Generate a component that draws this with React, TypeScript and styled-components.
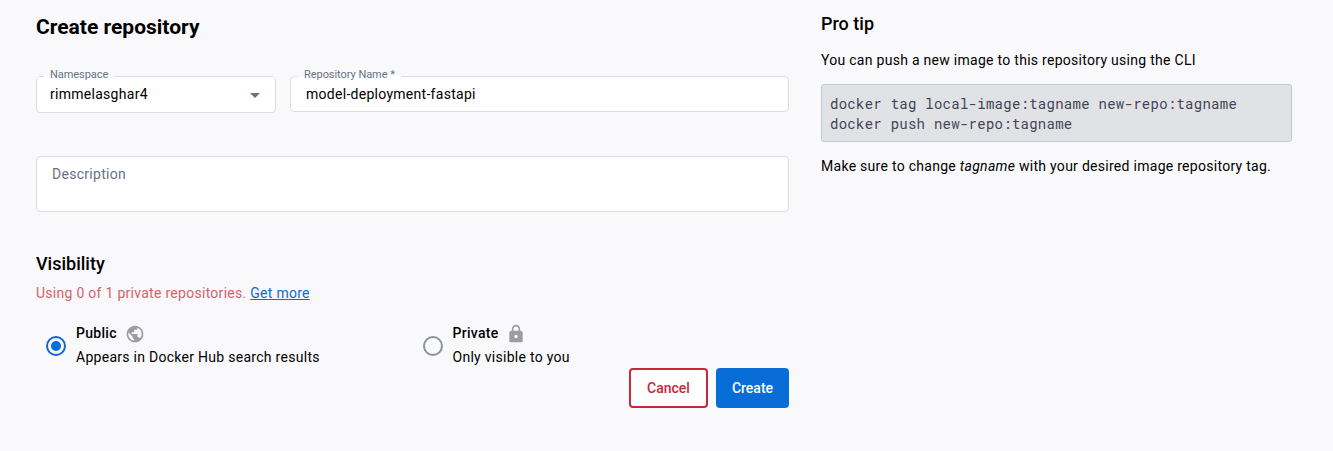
import React from "react";
import styled, { createGlobalStyle } from "styled-components";

const GlobalStyle = createGlobalStyle`
  * { box-sizing: border-box; }
  body {
    margin: 0;
    background: #f9f9fb;
    color: #000;
    font-family: Roboto, "Liberation Sans", sans-serif;
    font-size: 14px;
    line-height: 20px;
    letter-spacing: 0.28px;
  }
`;

const Page = styled.main`
  display: grid;
  grid-template-columns: 753px 471px;
  column-gap: 32px;
  min-height: 451px;
  padding: 0 36px;
`;

const FormColumn = styled.form`
  display: flex;
  flex-direction: column;
  padding-top: 15px;
`;

const Title = styled.h1`
  margin: 0;
  font-size: 21px;
  line-height: 24px;
  font-weight: 700;
  letter-spacing: 0;
`;

const FieldRow = styled.div`
  display: grid;
  grid-template-columns: 240px 499px;
  column-gap: 14px;
  align-items: start;
  margin-top: 31px;
`;

const Outlined = styled.fieldset<{ $height: number; $inset: number }>`
  display: block;
  min-width: 0;
  height: ${(p) => p.$height}px;
  margin: 0;
  padding: 0 14px 0 ${(p) => p.$inset}px;
  border: 1px solid #dcdde0;
  border-radius: 4px;
  background: #fff;
`;

const Legend = styled.legend<{ $shift: number }>`
  height: 13px;
  margin-left: ${(p) => -p.$shift}px;
  padding: 0 6px;
  color: #677285;
  font-size: 11px;
  line-height: 9px;
  letter-spacing: -0.05px;
`;

const FieldValue = styled.div`
  display: flex;
  align-items: center;
  justify-content: space-between;
  height: 22px;
`;

const Caret = styled.svg`
  width: 10px;
  height: 5px;
  margin: 2px 1px 0 0;
  fill: #677285;
`;

const Description = styled.div`
  height: 56px;
  margin-top: 43px;
  padding: 7px 15px;
  border: 1px solid #dcdde0;
  border-radius: 4px;
  background: #fff;
  color: #677285;
`;

const SectionTitle = styled.h2`
  margin: 0;
  font-size: 18px;
  line-height: 24px;
  font-weight: 500;
  letter-spacing: 0;
`;

const Visibility = styled.section`
  margin-top: 40px;
`;

const Usage = styled.p`
  margin: 7px 0 0;
  color: #d8606b;
`;

const Link = styled.a`
  color: #086dd7;
  text-decoration: underline;
`;

const Options = styled.div`
  display: grid;
  grid-template-columns: 376.5px 1fr;
  margin-top: 18px;
  padding-left: 10px;
`;

const Option = styled.label`
  display: flex;
  align-items: center;
  gap: 10px;
`;

const Radio = styled.span<{ $checked?: boolean }>`
  display: grid;
  place-items: center;
  width: 20px;
  height: 20px;
  margin-top: 2px;
  border: 2px solid ${(p) => (p.$checked ? "#1467c8" : "#8b91a1")};
  border-radius: 50%;

  &::after {
    content: "";
    width: 10px;
    height: 10px;
    border-radius: 50%;
    background: ${(p) => (p.$checked ? "#086dd7" : "transparent")};
  }
`;

const OptionName = styled.div`
  display: flex;
  align-items: center;
  gap: 8px;
  height: 24px;
  font-weight: 500;
`;

const OptionIcon = styled.svg`
  width: 20px;
  height: 20px;
  margin-top: 1px;
  fill: #9c9c9e;
`;

const OptionText = styled.div`
  height: 24px;
  line-height: 24px;
`;

const Actions = styled.div`
  display: flex;
  justify-content: flex-end;
  gap: 8px;
  margin-top: -1px;
`;

const Button = styled.button<{ $primary?: boolean }>`
  width: ${(p) => (p.$primary ? 73 : 79)}px;
  height: 40px;
  padding: 0;
  border: 2px solid ${(p) => (p.$primary ? "#086dd7" : "#c9283a")};
  border-radius: 4px;
  background: ${(p) => (p.$primary ? "#086dd7" : "#fff")};
  color: ${(p) => (p.$primary ? "#fff" : "#c9283a")};
  font: 500 14px/20px Roboto, "Liberation Sans", sans-serif;
  letter-spacing: 0;
`;

const Tip = styled.aside`
  padding-top: 12px;
`;

const TipText = styled.p`
  margin: 14px 0;
`;

const Code = styled.pre`
  height: 58px;
  margin: 0;
  padding: 9px 8px;
  border: 1px solid #c4c8d1;
  border-radius: 3px;
  background: #e1e2e6;
  color: #445;
  font: 14px/20px "Roboto Mono", "DejaVu Sans Mono", monospace;
  letter-spacing: 0.26px;
`;

export default function App() {
  return (
    <>
      <GlobalStyle />
      <Page>
        <FormColumn>
          <Title>Create repository</Title>
          <FieldRow>
            <Outlined $height={43} $inset={13}>
              <Legend $shift={6}>Namespace</Legend>
              <FieldValue>
                rimmelasghar4
                <Caret viewBox="0 0 10 5"><path d="M0 0h10L5 5z" /></Caret>
              </FieldValue>
            </Outlined>
            <Outlined $height={42} $inset={15}>
              <Legend $shift={8}>Repository Name *</Legend>
              <FieldValue>model-deployment-fastapi</FieldValue>
            </Outlined>
          </FieldRow>
          <Description>Description</Description>
          <Visibility>
            <SectionTitle>Visibility</SectionTitle>
            <Usage>Using 0 of 1 private repositories. <Link>Get more</Link></Usage>
            <Options>
              <Option>
                <Radio $checked />
                <div>
                  <OptionName>
                    Public
                    <OptionIcon viewBox="0 0 24 24"><path d="M12 2C6.48 2 2 6.48 2 12s4.48 10 10 10 10-4.48 10-10S17.52 2 12 2zm-1 17.93c-3.95-.49-7-3.85-7-7.93 0-.62.08-1.21.21-1.79L9 15v1c0 1.1.9 2 2 2v1.93zm6.9-2.54c-.26-.81-1-1.39-1.9-1.39h-1v-3c0-.55-.45-1-1-1H8v-2h2c.55 0 1-.45 1-1V7h2c1.1 0 2-.9 2-2v-.41c2.93 1.19 5 4.06 5 7.41 0 2.08-.8 3.97-2.1 5.39z" /></OptionIcon>
                  </OptionName>
                  <OptionText>Appears in Docker Hub search results</OptionText>
                </div>
              </Option>
              <Option>
                <Radio />
                <div>
                  <OptionName>
                    Private
                    <OptionIcon viewBox="0 0 24 24"><path d="M18 8h-1V6c0-2.76-2.24-5-5-5S7 3.24 7 6v2H6c-1.1 0-2 .9-2 2v10c0 1.1.9 2 2 2h12c1.1 0 2-.9 2-2V10c0-1.1-.9-2-2-2zm-6 9c-1.1 0-2-.9-2-2s.9-2 2-2 2 .9 2 2-.9 2-2 2zm3.1-9H8.9V6c0-1.71 1.39-3.1 3.1-3.1 1.71 0 3.1 1.39 3.1 3.1v2z" /></OptionIcon>
                  </OptionName>
                  <OptionText>Only visible to you</OptionText>
                </div>
              </Option>
            </Options>
          </Visibility>
          <Actions>
            <Button type="button">Cancel</Button>
            <Button type="button" $primary>Create</Button>
          </Actions>
        </FormColumn>
        <Tip>
          <SectionTitle>Pro tip</SectionTitle>
          <TipText>You can push a new image to this repository using the CLI</TipText>
          <Code>{"docker tag local-image:tagname new-repo:tagname\ndocker push new-repo:tagname"}</Code>
          <TipText>Make sure to change <em>tagname</em> with your desired image repository tag.</TipText>
        </Tip>
      </Page>
    </>
  );
}
